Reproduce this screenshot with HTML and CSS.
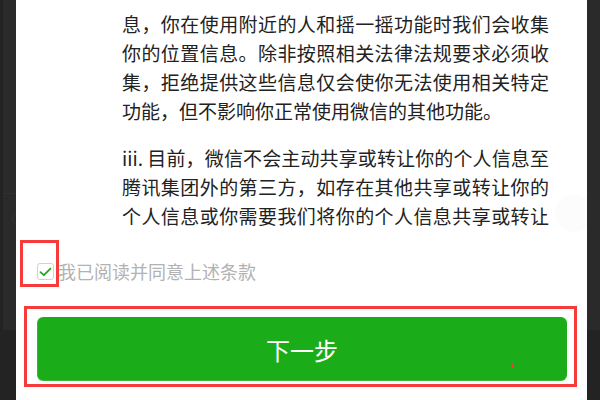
FILE: index.html
```html
<!DOCTYPE html>
<html lang="zh-CN">
<head>
<meta charset="utf-8">
<link rel="stylesheet" href="styles.css">
</head>
<body>
<div class="page">
  <div class="side side-left">
    <div class="back-panel back-panel-left">
      <div class="back-line"></div>
      <div class="back-dot"></div>
    </div>
  </div>
  <div class="modal">
    <div class="content">
      <p class="para">息，你在使用附近的人和摇一摇功能时我们会收集你的位置信息。除非按照相关法律法规要求必须收集，拒绝提供这些信息仅会使你无法使用相关特定功能，但不影响你正常使用微信的其他功能。</p>
      <p class="para para-last">iii. 目前，微信不会主动共享或转让你的个人信息至腾讯集团外的第三方，如存在其他共享或转让你的个人信息或你需要我们将你的个人信息共享或转让</p>
    </div>
    <label class="agree">
      <span class="check">
        <svg width="13" height="10" viewBox="0 0 13 10"><path d="M1.5 5.2 L4.8 8.2 L11.5 1.6" fill="none" stroke="#1aad19" stroke-width="1.8" stroke-linecap="round" stroke-linejoin="round"/></svg>
      </span>
      <span class="agree-text">我已阅读并同意上述条款</span>
    </label>
    <button class="next-btn">下一步</button>
    <div class="mark mark-check"></div>
    <div class="mark mark-btn"></div>
    <div class="red-dot"></div>
    <div class="ghost-circle"></div>
  </div>
  <div class="side side-right">
    <div class="back-panel back-panel-right"></div>
  </div>
</div>
</body>
</html>
```

FILE: styles.css
```css
html, body {
  margin: 0;
  padding: 0;
}
body {
  width: 600px;
  height: 400px;
  overflow: hidden;
  background: #232323;
  font-family: "Noto Sans CJK SC", "Noto Sans", sans-serif;
}
.page {
  display: flex;
  width: 600px;
  height: 400px;
}
.side {
  flex: none;
  height: 400px;
  background: #232323;
}
.side-left {
  width: 16px;
}
.side-right {
  width: 13px;
}
.back-panel {
  height: 330px;
  background: #2a2a2a;
  position: relative;
}
.back-panel-left {
  margin-left: 3px;
}
.back-line {
  position: absolute;
  left: 0;
  right: 0;
  top: 193px;
  height: 1px;
  background: #303030;
}
.back-dot {
  position: absolute;
  left: 9px;
  top: 212px;
  width: 14px;
  height: 14px;
  border-radius: 50%;
  border: 1px solid #353535;
  box-sizing: border-box;
}
.modal {
  flex: none;
  width: 571px;
  height: 400px;
  background: #fff;
  position: relative;
  display: flex;
  flex-direction: column;
}
.content {
  height: 232px;
  padding: 9px 0 0 106px;
  box-sizing: border-box;
}
.para {
  width: 427px;
  margin: 0 0 18px;
  font-size: 19px;
  line-height: 29px;
  color: #222;
  text-align: justify;
}
.para-last {
  margin-bottom: 0;
  text-align-last: justify;
}
.agree {
  display: flex;
  align-items: center;
  height: 19px;
  margin-top: 30px;
  padding-left: 21px;
}
.check {
  flex: none;
  width: 17px;
  height: 17px;
  box-sizing: border-box;
  border: 1px solid #d2d2d2;
  border-radius: 3px;
  display: flex;
  align-items: center;
  justify-content: center;
  background: #fff;
}
.agree-text {
  margin-left: 4px;
  font-size: 18px;
  line-height: 19px;
  color: #b2b2b2;
}
.next-btn {
  display: block;
  margin: 36px 0 0 21px;
  width: 530px;
  height: 64px;
  border: none;
  border-radius: 6px;
  background: #1aad19;
  color: #fff;
  font-family: "Noto Sans CJK SC", "Noto Sans", sans-serif;
  font-size: 24px;
  padding: 0;
  box-shadow: inset 0 -1px 0 rgba(255,255,255,0.15), inset 1px 0 0 rgba(255,255,255,0.12);
}
.mark {
  position: absolute;
  border: 3px solid #f73b3b;
  box-sizing: border-box;
}
.mark-check {
  left: 4px;
  top: 240px;
  width: 39px;
  height: 47px;
}
.mark-btn {
  left: 8px;
  top: 306px;
  width: 553px;
  height: 81px;
}
.red-dot {
  position: absolute;
  left: 495px;
  top: 364px;
  width: 3px;
  height: 3px;
  background: #f73b3b;
}
.ghost-circle {
  position: absolute;
  left: 539px;
  top: 194px;
  width: 38px;
  height: 38px;
  border-radius: 50%;
  background: #fcfcfc;
}
```
